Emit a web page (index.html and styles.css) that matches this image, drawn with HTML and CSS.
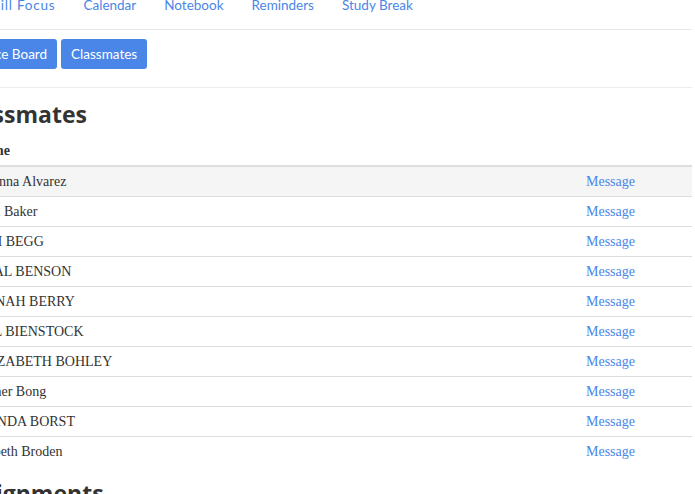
FILE: index.html
```html
<!DOCTYPE html>
<html lang="en">
<head>
<meta charset="utf-8">
<title>Classmates</title>
<link rel="stylesheet" href="styles.css">
</head>
<body>
<div class="page">
  <nav class="topnav">
    <a class="nav-link nav-brand" href="#">Skill Focus</a>
    <a class="nav-link" href="#">Calendar</a>
    <a class="nav-link" href="#">Notebook</a>
    <a class="nav-link" href="#">Reminders</a>
    <a class="nav-link" href="#">Study Break</a>
  </nav>
  <div class="btn-row">
    <a class="btn btn-first" href="#">Notice Board</a>
    <a class="btn" href="#">Classmates</a>
  </div>
  <section class="section">
    <h2 class="section-title">Classmates</h2>
    <table class="roster">
      <colgroup><col class="col-name"><col class="col-action"></colgroup>
      <thead>
        <tr><th>Name</th><th></th></tr>
      </thead>
      <tbody>
        <tr class="active"><td>Brianna Alvarez</td><td><a class="msg" href="#">Message</a></td></tr>
        <tr><td>Tom Baker</td><td><a class="msg" href="#">Message</a></td></tr>
        <tr><td>KIM BEGG</td><td><a class="msg" href="#">Message</a></td></tr>
        <tr><td>NEAL BENSON</td><td><a class="msg" href="#">Message</a></td></tr>
        <tr><td>HANAH BERRY</td><td><a class="msg" href="#">Message</a></td></tr>
        <tr><td>JILL BIENSTOCK</td><td><a class="msg" href="#">Message</a></td></tr>
        <tr><td>ELIZABETH BOHLEY</td><td><a class="msg" href="#">Message</a></td></tr>
        <tr><td>Luther Bong</td><td><a class="msg" href="#">Message</a></td></tr>
        <tr><td>WANDA BORST</td><td><a class="msg" href="#">Message</a></td></tr>
        <tr><td>Lizbeth Broden</td><td><a class="msg" href="#">Message</a></td></tr>
      </tbody>
    </table>
  </section>
  <section class="section">
    <h2 class="section-title">Assignments</h2>
  </section>
</div>
</body>
</html>
```

FILE: styles.css
```css
html, body {
  margin: 0;
  padding: 0;
  background: #ffffff;
  overflow: hidden;
}

body {
  font-family: Lato, "Open Sans", sans-serif;
  color: #333333;
}

.page {
  width: 725px;
  margin-left: -33px;
  margin-top: -5px;
}

.topnav {
  display: flex;
  padding-bottom: 14px;
  border-bottom: 1px solid #e8e8e8;
}

.nav-link {
  font-size: 13.5px;
  line-height: 20px;
  color: #4a86e8;
  text-decoration: none;
  padding: 0 14px;
}

.nav-brand {
  padding-left: 18px;
  letter-spacing: 0.8px;
}

.btn-row {
  display: flex;
  gap: 4px;
  padding: 9px 0 18px;
  border-bottom: 1px solid #ececec;
}

.btn {
  display: block;
  height: 30px;
  line-height: 30px;
  padding: 0 10px;
  font-size: 13.5px;
  color: #ffffff;
  background: #4a86e8;
  border-radius: 3px;
  text-decoration: none;
}

.btn-first {
  margin-left: -8px;
}

.section-title {
  font-family: "Open Sans", Lato, sans-serif;
  font-size: 23px;
  font-weight: 700;
  line-height: 24px;
  margin: 14px 0 10px;
  text-indent: -10px;
  color: #333333;
}

.section + .section .section-title {
  margin-top: 15px;
}

.roster {
  width: 725px;
  border-collapse: collapse;
  table-layout: fixed;
  font-family: "Liberation Serif", "Times New Roman", serif;
  font-size: 14px;
  line-height: 19px;
  color: #333333;
}

.col-name {
  width: 611px;
}

.roster th {
  text-align: left;
  font-weight: 700;
  padding: 5px 8px;
  border-bottom: 2px solid #dddddd;
}

.roster td {
  padding: 5px 8px;
  border-top: 1px solid #dddddd;
}

.roster tbody tr:first-child td {
  border-top: 0;
}

.roster tr.active {
  background: #f5f5f5;
}

.msg {
  color: #4a86e8;
  text-decoration: none;
}
```
